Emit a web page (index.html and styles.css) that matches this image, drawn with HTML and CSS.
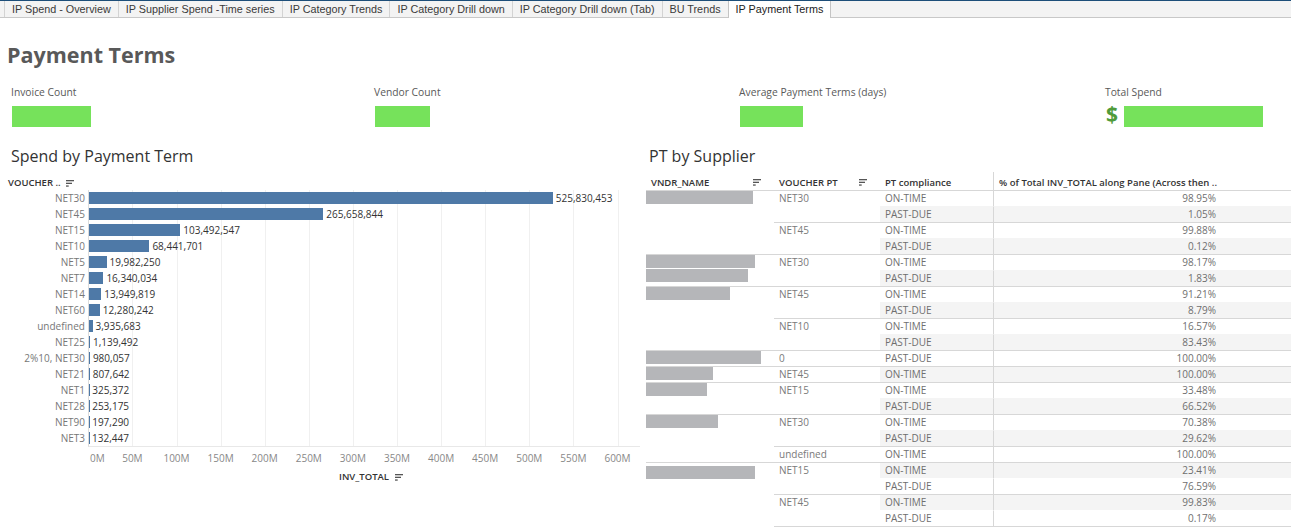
FILE: index.html
```html
<!DOCTYPE html>
<html lang="en">
<head>
<meta charset="utf-8">
<title>IP Payment Terms</title>
<link rel="stylesheet" href="styles.css">
</head>
<body>
<nav class="tabs">
  <div class="tab">IP Spend - Overview</div>
  <div class="tab">IP Supplier Spend -Time series</div>
  <div class="tab">IP Category Trends</div>
  <div class="tab">IP Category Drill down</div>
  <div class="tab">IP Category Drill down (Tab)</div>
  <div class="tab">BU Trends</div>
  <div class="tab active">IP Payment Terms</div>
</nav>

<main class="dash">
  <h1 class="title">Payment Terms</h1>

  <section class="kpis">
    <div class="kpi">
      <div class="kpi-label">Invoice Count</div>
      <div class="kpi-value"><span class="redact" style="width:79px"></span></div>
    </div>
    <div class="kpi">
      <div class="kpi-label">Vendor Count</div>
      <div class="kpi-value"><span class="redact" style="width:55px"></span></div>
    </div>
    <div class="kpi">
      <div class="kpi-label">Average Payment Terms (days)</div>
      <div class="kpi-value"><span class="redact" style="width:63px"></span></div>
    </div>
    <div class="kpi">
      <div class="kpi-label">Total Spend</div>
      <div class="kpi-value"><span class="dollar">$</span><span class="redact after-dollar" style="width:139px"></span></div>
    </div>
  </section>

  <section class="panels">
    <div class="panel">
      <h2 class="panel-title">Spend by Payment Term</h2>
      <div class="chart-head">VOUCHER .. <svg class="sort" width="9" height="7" viewBox="0 0 9 7"><rect x="0" y="0" width="8" height="1.3"/><rect x="0" y="2.7" width="6" height="1.3"/><rect x="0" y="5.4" width="2.7" height="1.3"/></svg></div>
      <div class="chart">
        <div class="labels">
          <div>NET30</div><div>NET45</div><div>NET15</div><div>NET10</div>
          <div>NET5</div><div>NET7</div><div>NET14</div><div>NET60</div>
          <div>undefined</div><div>NET25</div><div>2%10, NET30</div><div>NET21</div>
          <div>NET1</div><div>NET28</div><div>NET90</div><div>NET3</div>
        </div>
        <div class="plot">
          <span class="grid-line" style="left:43.4px"></span>
          <span class="grid-line" style="left:87.5px"></span>
          <span class="grid-line" style="left:131.6px"></span>
          <span class="grid-line" style="left:175.7px"></span>
          <span class="grid-line" style="left:219.8px"></span>
          <span class="grid-line" style="left:263.9px"></span>
          <span class="grid-line" style="left:308px"></span>
          <span class="grid-line" style="left:352.1px"></span>
          <span class="grid-line" style="left:396.2px"></span>
          <span class="grid-line" style="left:440.3px"></span>
          <span class="grid-line" style="left:484.4px"></span>
          <span class="grid-line" style="left:528.5px"></span>
          <div class="bar-row"><span class="bar" style="width:463.8px"></span><span class="val">525,830,453</span></div>
          <div class="bar-row"><span class="bar" style="width:234.3px"></span><span class="val">265,658,844</span></div>
          <div class="bar-row"><span class="bar" style="width:91.3px"></span><span class="val">103,492,547</span></div>
          <div class="bar-row"><span class="bar" style="width:60.4px"></span><span class="val">68,441,701</span></div>
          <div class="bar-row"><span class="bar" style="width:17.6px"></span><span class="val">19,982,250</span></div>
          <div class="bar-row"><span class="bar" style="width:14.4px"></span><span class="val">16,340,034</span></div>
          <div class="bar-row"><span class="bar" style="width:12.3px"></span><span class="val">13,949,819</span></div>
          <div class="bar-row"><span class="bar" style="width:10.8px"></span><span class="val">12,280,242</span></div>
          <div class="bar-row"><span class="bar" style="width:3.5px"></span><span class="val">3,935,683</span></div>
          <div class="bar-row"><span class="bar" style="width:1px"></span><span class="val">1,139,492</span></div>
          <div class="bar-row"><span class="bar" style="width:0.9px"></span><span class="val">980,057</span></div>
          <div class="bar-row"><span class="bar" style="width:0.7px"></span><span class="val">807,642</span></div>
          <div class="bar-row"><span class="bar" style="width:0.3px"></span><span class="val">325,372</span></div>
          <div class="bar-row"><span class="bar" style="width:0.2px"></span><span class="val">253,175</span></div>
          <div class="bar-row"><span class="bar" style="width:0.2px"></span><span class="val">197,290</span></div>
          <div class="bar-row"><span class="bar" style="width:0.1px"></span><span class="val">132,447</span></div>
        </div>
      </div>
      <div class="axis">
        <span class="tick first">0M</span>
        <span class="tick" style="left:44.4px">50M</span>
        <span class="tick" style="left:88.5px">100M</span>
        <span class="tick" style="left:132.6px">150M</span>
        <span class="tick" style="left:176.7px">200M</span>
        <span class="tick" style="left:220.8px">250M</span>
        <span class="tick" style="left:264.9px">300M</span>
        <span class="tick" style="left:309px">350M</span>
        <span class="tick" style="left:353.1px">400M</span>
        <span class="tick" style="left:397.2px">450M</span>
        <span class="tick" style="left:441.3px">500M</span>
        <span class="tick" style="left:485.4px">550M</span>
        <span class="tick" style="left:529.5px">600M</span>
      </div>
      <div class="axis-title">INV_TOTAL <svg class="sort" width="9" height="7" viewBox="0 0 9 7"><rect x="0" y="0" width="8" height="1.3"/><rect x="0" y="2.7" width="6" height="1.3"/><rect x="0" y="5.4" width="2.7" height="1.3"/></svg></div>
    </div>

    <div class="panel">
      <h2 class="panel-title">PT by Supplier</h2>
      <div class="pt-table">
        <div class="th c1 sortable"><span>VNDR_NAME</span><svg class="sort" width="9" height="7" viewBox="0 0 9 7"><rect x="0" y="0" width="8" height="1.3"/><rect x="0" y="2.7" width="6" height="1.3"/><rect x="0" y="5.4" width="2.7" height="1.3"/></svg></div>
        <div class="th c2 sortable"><span>VOUCHER PT</span><svg class="sort" width="9" height="7" viewBox="0 0 9 7"><rect x="0" y="0" width="8" height="1.3"/><rect x="0" y="2.7" width="6" height="1.3"/><rect x="0" y="5.4" width="2.7" height="1.3"/></svg></div>
        <div class="th c3">PT compliance</div>
        <div class="th c4">% of Total INV_TOTAL along Pane (Across then ..</div>

        <!-- Vendor 1 -->
        <div class="vend span4"><span class="name" style="width:107px"></span></div>
        <div class="vpt span2">NET30</div>
        <div class="comp first">ON-TIME</div><div class="pct first">98.95%</div>
        <div class="comp alt">PAST-DUE</div><div class="pct alt">1.05%</div>
        <div class="vpt span2">NET45</div>
        <div class="comp first">ON-TIME</div><div class="pct first">99.88%</div>
        <div class="comp alt">PAST-DUE</div><div class="pct alt">0.12%</div>

        <!-- Vendor 2 -->
        <div class="vend span2"><span class="name" style="width:109px"></span><span class="name" style="width:102px"></span></div>
        <div class="vpt span2">NET30</div>
        <div class="comp first">ON-TIME</div><div class="pct first">98.17%</div>
        <div class="comp alt">PAST-DUE</div><div class="pct alt">1.83%</div>

        <!-- Vendor 3 -->
        <div class="vend span4"><span class="name" style="width:84px"></span></div>
        <div class="vpt span2">NET45</div>
        <div class="comp first">ON-TIME</div><div class="pct first">91.21%</div>
        <div class="comp alt">PAST-DUE</div><div class="pct alt">8.79%</div>
        <div class="vpt span2">NET10</div>
        <div class="comp first">ON-TIME</div><div class="pct first">16.57%</div>
        <div class="comp alt">PAST-DUE</div><div class="pct alt">83.43%</div>

        <!-- Vendor 4 -->
        <div class="vend span1"><span class="name" style="width:115px"></span></div>
        <div class="vpt span1">0</div>
        <div class="comp first">PAST-DUE</div><div class="pct first">100.00%</div>

        <!-- Vendor 5 -->
        <div class="vend span1"><span class="name" style="width:67px"></span></div>
        <div class="vpt span1">NET45</div>
        <div class="comp first alt">ON-TIME</div><div class="pct first alt">100.00%</div>

        <!-- Vendor 6 -->
        <div class="vend span2"><span class="name" style="width:61px"></span></div>
        <div class="vpt span2">NET15</div>
        <div class="comp first">ON-TIME</div><div class="pct first">33.48%</div>
        <div class="comp alt">PAST-DUE</div><div class="pct alt">66.52%</div>

        <!-- Vendor 7 -->
        <div class="vend span3"><span class="name" style="width:72px"></span></div>
        <div class="vpt span2">NET30</div>
        <div class="comp first">ON-TIME</div><div class="pct first">70.38%</div>
        <div class="comp alt">PAST-DUE</div><div class="pct alt">29.62%</div>
        <div class="vpt span1">undefined</div>
        <div class="comp first">ON-TIME</div><div class="pct first">100.00%</div>

        <!-- Vendor 8 -->
        <div class="vend span4 lower"><span class="name" style="width:109px"></span></div>
        <div class="vpt span2">NET15</div>
        <div class="comp first alt">ON-TIME</div><div class="pct first alt">23.41%</div>
        <div class="comp">PAST-DUE</div><div class="pct">76.59%</div>
        <div class="vpt span2">NET45</div>
        <div class="comp first alt">ON-TIME</div><div class="pct first alt">99.83%</div>
        <div class="comp">PAST-DUE</div><div class="pct">0.17%</div>

        <div class="end-line"></div>
      </div>
    </div>
  </section>
</main>
</body>
</html>
```

FILE: styles.css
```css
* { box-sizing: border-box; }

html, body { margin: 0; padding: 0; background: #fff; }

body {
  width: 1291px;
  height: 528px;
  overflow: hidden;
  font-family: "Open Sans", "Noto Sans", sans-serif;
  color: #333;
}

/* ---------- Tab strip ---------- */
.tabs {
  display: flex;
  height: 18px;
  padding-left: 4px;
  background: #f3f3f3;
  border-top: 1px solid #1d4e79;
  border-bottom: 1px solid #c8c8c8;
  font-family: "Liberation Sans", Arial, sans-serif;
  font-size: 10.8px;
  color: #3a3a3a;
}
.tab {
  padding: 0 7px;
  line-height: 16px;
  white-space: nowrap;
  border-left: 1px solid #d3d3d3;
}
.tab.active {
  height: 17px;
  margin-bottom: -1px;
  background: #fff;
  color: #222;
  border-left-color: #c4c4c4;
  border-right: 1px solid #c4c4c4;
}

/* ---------- Dashboard ---------- */
.dash { padding-left: 8px; }

.title {
  margin: 26px 0 0 -1px;
  font-size: 21.5px;
  line-height: 22px;
  font-weight: 700;
  color: #595959;
}

/* KPIs */
.kpis {
  display: grid;
  grid-template-columns: 363px 365px 366px 1fr;
  margin-top: 19px;
  padding-left: 4px;
}
.kpi-label {
  margin-left: -1px;
  font-size: 10.3px;
  line-height: 14px;
  color: #595959;
}
.kpi-value {
  display: flex;
  align-items: flex-start;
  height: 21px;
  margin-top: 7px;
}
.redact {
  display: block;
  height: 21px;
  background: #76e25b;
}
.dollar {
  font-size: 21px;
  line-height: 17px;
  font-weight: 700;
  color: #4f9b3a;
}
.after-dollar { margin-left: 6px; }

/* Panels */
.panels {
  display: grid;
  grid-template-columns: 638px 1fr;
  margin-top: 19px;
}
.panel-title {
  margin: 0 0 0 3px;
  font-size: 16px;
  line-height: 20px;
  font-weight: 400;
  color: #333;
}

.sort { fill: #555; flex: none; }

/* Bar chart */
.chart-head {
  display: flex;
  align-items: center;
  gap: 3px;
  height: 14px;
  margin-top: 10px;
  font-size: 9.5px;
  line-height: 14px;
  font-weight: 600;
  color: #333;
  white-space: pre;
}
.chart { display: flex; gap: 3px; }
.labels {
  width: 77px;
  text-align: right;
  font-size: 10px;
  line-height: 16px;
  color: #777;
  white-space: nowrap;
}
.plot {
  position: relative;
  width: 552px;
  border-left: 1px solid #dcdcdc;
  border-bottom: 1px solid #e8e8e8;
}
.grid-line {
  position: absolute;
  top: 0;
  bottom: 0;
  width: 1px;
  background: #f0f0f0;
}
.bar-row {
  position: relative;
  display: flex;
  align-items: center;
  height: 16px;
}
.bar {
  display: block;
  height: 12px;
  flex: none;
  background: #4e79a7;
}
.val {
  margin-left: 3px;
  font-size: 10px;
  line-height: 16px;
  color: #333;
  white-space: nowrap;
}
.axis {
  position: relative;
  height: 14px;
  margin: 4px 0 0 80px;
  font-size: 10px;
  line-height: 14px;
  color: #888;
}
.tick {
  position: absolute;
  top: 0;
  transform: translateX(-50%);
  white-space: nowrap;
}
.tick.first { left: 2px; transform: none; }
.axis-title {
  display: flex;
  align-items: center;
  gap: 4px;
  margin-top: 5px;
  padding-left: 331px;
  font-size: 9.5px;
  line-height: 14px;
  font-weight: 600;
  color: #333;
  white-space: pre;
}

/* Supplier table */
.pt-table {
  display: grid;
  grid-template-columns: 128px 106px 113px 1fr;
  grid-template-rows: 18px repeat(21, 16px) 1px;
  margin-top: 6px;
  font-size: 10px;
  color: #6f6f6f;
}
.th {
  padding: 3px 0 0 5px;
  font-size: 9.5px;
  line-height: 15px;
  font-weight: 600;
  color: #333;
  white-space: nowrap;
}
.th.sortable {
  display: flex;
  justify-content: space-between;
  align-items: flex-start;
  padding-right: 12px;
}
.th.sortable .sort { margin-top: 4px; }
.c1 { grid-column: 1; }
.c2 { grid-column: 2; }
.c3 { grid-column: 3; }
.c4 { grid-column: 4; border-left: 1px solid #d7d7d7; padding-left: 5px; }

.vend, .vpt, .comp, .pct {
  border-top: 1px solid transparent;
  line-height: 15px;
  white-space: nowrap;
}
.vend {
  grid-column: 1;
  border-top-color: #d7d7d7;
  display: flex;
  flex-direction: column;
  gap: 1px;
}
.vend.lower { padding-top: 3px; }
.vend .name {
  display: block;
  height: 13px;
  background: #b5b6b9;
}
.vpt {
  grid-column: 2;
  padding-left: 5px;
  border-top-color: #d7d7d7;
  color: #7a7a7a;
}
.comp { grid-column: 3; padding-left: 5px; }
.pct {
  grid-column: 4;
  text-align: right;
  padding-right: 75px;
  border-left: 1px solid #d7d7d7;
}
.first { border-top-color: #d7d7d7; }
.alt { background: #f4f4f4; }

.span1 { grid-row: span 1; }
.span2 { grid-row: span 2; }
.span3 { grid-row: span 3; }
.span4 { grid-row: span 4; }

.end-line {
  grid-column: 2 / 5;
  background: #d7d7d7;
}
```
